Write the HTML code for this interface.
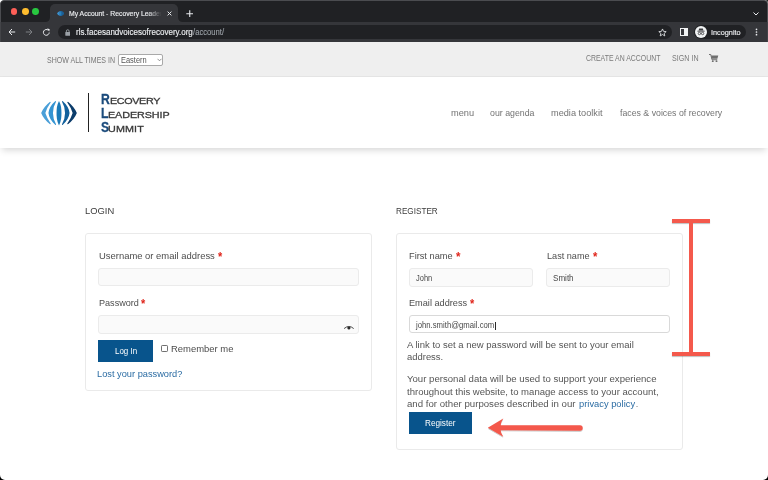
<!DOCTYPE html>
<html><head><meta charset="utf-8">
<style>
*{margin:0;padding:0;box-sizing:border-box}
html,body{width:768px;height:480px;overflow:hidden;background:#000}
#bgtl{position:absolute;left:0;top:0;width:3px;height:3px;background:#fff}
#bgtr{position:absolute;right:0;top:0;width:4px;height:4px;background:#262927}
body{font-family:"Liberation Sans",sans-serif;position:relative}
#win{position:absolute;left:0;top:0;width:768px;height:480px;background:#fff;border-radius:4px 4px 5px 5px;overflow:hidden}
.a{position:absolute}
.t{position:absolute;white-space:nowrap;line-height:1;transform-origin:0 0}
#title{left:0;top:0;width:768px;height:23px;background:#202124;border:1px solid #4b4c50;border-bottom:none;border-radius:4px 4px 0 0}
#toolbar{left:0;top:22px;width:768px;height:19.5px;background:#35363a;border-left:1px solid #434448;border-right:1px solid #434448}
.dot{position:absolute;width:6.8px;height:6.8px;border-radius:50%;top:7.1px}
#tab{left:49.5px;top:4.3px;width:128px;height:18px;background:#35363a;border-radius:5px 5px 0 0}
#omni{left:57.8px;top:24.8px;width:614px;height:14px;background:#202124;border-radius:7px}
#pill{left:694px;top:25px;width:52px;height:14px;background:#202124;border-radius:7px}
#topbar{left:0;top:41.5px;width:768px;height:35.6px;background:#efefef;border-bottom:1px solid #e5e5e5}
#header{left:0;top:77.1px;width:768px;height:70.8px;background:#fff;box-shadow:0 4px 7px -2px rgba(0,0,0,.17)}
.box{position:absolute;border:1px solid #eaeaea;border-radius:3px;background:#fff}
.inp{position:absolute;border:1px solid #ebebeb;border-radius:3px;background:#fafafa}
.btn{position:absolute;background:#08548c}
.red{position:absolute;background:#f4594c;box-shadow:0 1px 1px rgba(0,0,0,.25)}
</style></head><body>
<div id="bgtl"></div><div id="bgtr"></div>
<div id="win">
  <div id="title" class="a">
    <div class="dot" style="left:9.6px;background:#fe5f57"></div>
    <div class="dot" style="left:21px;background:#febc2e"></div>
    <div class="dot" style="left:31.2px;background:#28c840"></div>
  </div>
  <div id="tab" class="a"></div>
  <div id="toolbar" class="a"></div>
  <!-- tab flares -->
  <svg class="a" style="left:44.5px;top:17px" width="5" height="5"><path d="M0 5 Q5 5 5 0 L5 5 Z" fill="#35363a"/></svg>
  <svg class="a" style="left:177.5px;top:17px" width="5" height="5"><path d="M5 5 Q0 5 0 0 L0 5 Z" fill="#35363a"/></svg>
  <!-- favicon -->
  <svg class="a" style="left:56.6px;top:10.9px" width="7.4" height="5" viewBox="-9 -6 18 12">
    <path d="M-2 -5.8 Q-8 -3 -9 0 Q-8 3 -2 5.8 Z" fill="#3a8fcc"/>
    <path d="M-2.6 -5.8 Q0 -6.5 2.6 -5.8 Q8 -3 9 0 Q8 3 2.6 5.8 Q0 6.5 -2.6 5.8 Q-1 0 -2.6 -5.8Z" fill="#1b5f96"/>
    <ellipse cx="0" cy="0" rx="1.6" ry="5.6" fill="#2a83c0"/>
  </svg>
  <!-- tab close -->
  <svg class="a" style="left:166.7px;top:10.9px" width="5" height="5"><path d="M0.6 0.6 L4.4 4.4 M4.4 0.6 L0.6 4.4" stroke="#e8eaed" stroke-width="1"/></svg>
  <!-- new tab plus -->
  <svg class="a" style="left:185.8px;top:9.7px" width="7.5" height="7.5"><path d="M3.75 0.3 V7.2 M0.3 3.75 H7.2" stroke="#e8eaed" stroke-width="1.1"/></svg>
  <!-- chevron -->
  <svg class="a" style="left:753px;top:11.5px" width="6" height="4"><path d="M0.5 0.5 L3 3 L5.5 0.5" stroke="#e8eaed" stroke-width="1" fill="none"/></svg>
  <!-- nav buttons -->
  <svg class="a" style="left:7.5px;top:28px" width="8" height="8"><path d="M7.2 4 H1.2 M4 1 L1 4 L4 7" stroke="#e8eaed" stroke-width="1" fill="none"/></svg>
  <svg class="a" style="left:24.7px;top:28px" width="8" height="8"><path d="M0.8 4 H6.8 M4 1 L7 4 L4 7" stroke="#7c7e82" stroke-width="1" fill="none"/></svg>
  <svg class="a" style="left:41.6px;top:27.6px" width="9" height="9"><path d="M7.2 4.5 A2.9 2.9 0 1 1 6.3 2.3" stroke="#e8eaed" stroke-width="1" fill="none"/><path d="M4.9 0.6 L7.6 0.9 L7.3 3.6 Z" fill="#e8eaed"/></svg>
  <div id="omni" class="a"></div>
  <!-- lock -->
  <svg class="a" style="left:64.6px;top:28.6px" width="5.5" height="7"><path d="M1.4 3 V2.1 A1.35 1.35 0 0 1 4.1 2.1 V3" stroke="#9aa0a6" stroke-width="0.9" fill="none"/><rect x="0.3" y="3" width="4.9" height="3.8" rx="0.5" fill="#9aa0a6"/></svg>
  <!-- star -->
  <svg class="a" style="left:657.5px;top:27.5px" width="9" height="9" viewBox="0 0 24 24"><path d="M12 2.5 L14.8 9 L21.8 9.6 L16.5 14.2 L18.1 21.1 L12 17.4 L5.9 21.1 L7.5 14.2 L2.2 9.6 L9.2 9 Z" stroke="#e8eaed" stroke-width="2.2" fill="none" stroke-linejoin="round"/></svg>
  <!-- sidebar icon -->
  <div class="a" style="left:679.9px;top:27.9px;width:7.8px;height:8.1px;border:1px solid #f1f3f4;"></div>
  <div class="a" style="left:684.2px;top:27.9px;width:3.5px;height:8.1px;background:#f1f3f4"></div>
  <div id="pill" class="a"></div>
  <svg class="a" style="left:694.5px;top:25.8px" width="12" height="12" viewBox="0 0 12 12">
    <circle cx="6" cy="6" r="6" fill="#f1f3f4"/>
    <path d="M4.1 2.6 H7.9 L8.4 4.6 H3.6 Z" fill="#3c3d40"/>
    <rect x="2.4" y="4.7" width="7.2" height="0.9" fill="#3c3d40"/>
    <circle cx="4.4" cy="7.5" r="1.2" stroke="#3c3d40" stroke-width="0.8" fill="none"/>
    <circle cx="7.6" cy="7.5" r="1.2" stroke="#3c3d40" stroke-width="0.8" fill="none"/>
    <path d="M5.5 7.3 H6.5" stroke="#3c3d40" stroke-width="0.6"/>
  </svg>
  <!-- menu dots -->
  <svg class="a" style="left:754.5px;top:28px" width="3" height="9"><circle cx="1.5" cy="1.3" r="0.85" fill="#e8eaed"/><circle cx="1.5" cy="4.0" r="0.85" fill="#e8eaed"/><circle cx="1.5" cy="6.7" r="0.85" fill="#e8eaed"/></svg>

  <!-- PAGE -->
  <div id="topbar" class="a"></div>
  <div class="a" style="left:118px;top:53.5px;width:45.3px;height:12px;background:#fff;border:1px solid #a9a9a9;border-radius:2px"></div>
  <svg class="a" style="left:156.5px;top:57.5px" width="5" height="4"><path d="M0.5 0.8 L2.5 2.8 L4.5 0.8" stroke="#777" stroke-width="0.8" fill="none"/></svg>
  <!-- cart -->
  <svg class="a" style="left:709px;top:53.8px" width="9.5" height="8.5" viewBox="0 0 19 17">
    <path d="M0 1 H3.5 L6 11.5 H16.5" stroke="#6f6f6f" stroke-width="2" fill="none"/>
    <path d="M4.3 3 H18.5 L16.8 9.5 H5.8 Z" fill="#6f6f6f"/>
    <circle cx="7.5" cy="14.5" r="1.9" fill="#6f6f6f"/>
    <circle cx="15" cy="14.5" r="1.9" fill="#6f6f6f"/>
  </svg>
  <div id="header" class="a"></div>
  <!-- logo -->
  <svg class="a" style="left:38.55px;top:98.5px" width="40" height="28" viewBox="-20 -14 40 28">
    <path d="M-9.0 -11.3 Q-15.5 -6 -17.85 0 Q-15.5 6 -9.0 11.3 Q-8.5 11.3 -8.2 10.8 Q-12 5.5 -13.65 0 Q-12 -5.5 -8.2 -10.8 Q-8.5 -11.3 -9.0 -11.3 Z" fill="#4a9fd8"/>
    <path d="M-3.6 -11.9 Q-9.8 -6.5 -10.55 0 Q-9.8 6.5 -3.6 11.9 Q-3.1 11.9 -2.9 11.4 Q-6.05 6 -6.05 0 Q-6.05 -6 -2.9 -11.4 Q-3.1 -11.9 -3.6 -11.9 Z" fill="#3594d2"/>
    <path d="M0 -12.1 C-2.2 -8 -2.45 -4 -2.45 0 C-2.45 4 -2.2 8 0 12.4 C2.2 8 2.45 4 2.45 0 C2.45 -4 2.2 -8 0 -12.1 Z" fill="#1a7ab8"/>
    <path d="M3.6 -11.9 Q9.8 -6.5 10.55 0 Q9.8 6.5 3.6 11.9 Q3.1 11.9 2.9 11.4 Q6.05 6 6.05 0 Q6.05 -6 2.9 -11.4 Q3.1 -11.9 3.6 -11.9 Z" fill="#11609c"/>
    <path d="M9.0 -11.3 Q15.5 -6 17.85 0 Q15.5 6 9.0 11.3 Q8.5 11.3 8.2 10.8 Q12 5.5 13.65 0 Q12 -5.5 8.2 -10.8 Q8.5 -11.3 9.0 -11.3 Z" fill="#0c3d6b"/>
  </svg>
  <div class="a" style="left:87.8px;top:93px;width:1.3px;height:38.8px;background:#222"></div>

  <!-- login box -->
  <div class="box" style="left:85px;top:233px;width:287px;height:157.5px"></div>
  <div class="inp" style="left:98.3px;top:268px;width:260.6px;height:18.4px"></div>
  <div class="inp" style="left:98.3px;top:315.3px;width:260.6px;height:18.4px"></div>
  <svg class="a" style="left:343.5px;top:324.5px" width="10" height="5.5" viewBox="0 0 20 11"><path d="M0.8 6.6 Q9.8 -1.2 18.8 6.6" stroke="#2a2a2a" stroke-width="1.7" fill="none" stroke-linecap="round"/><path d="M7 3.4 H12.6 V6.4 A2.8 2.8 0 0 1 7 6.4 Z" fill="#2a2a2a"/></svg>
  <div class="btn" style="left:98.1px;top:339.9px;width:54.8px;height:21.7px"></div>
  <div class="a" style="left:161px;top:345.3px;width:7px;height:7px;border:0.7px solid #707070;border-radius:1.2px;background:#fff"></div>

  <!-- register box -->
  <div class="box" style="left:396px;top:233px;width:287px;height:216.5px"></div>
  <div class="inp" style="left:408.7px;top:268px;width:124.3px;height:18.6px"></div>
  <div class="inp" style="left:546.1px;top:268px;width:123.6px;height:18.6px"></div>
  <div class="a" style="left:408.6px;top:315.3px;width:261.1px;height:18.2px;border:1px solid #d9d9d9;border-radius:3px;background:#fff"></div>
  <div class="a" style="left:494.5px;top:321.6px;width:0.9px;height:8.4px;background:#2a2a2a"></div>
  <div class="btn" style="left:408.9px;top:412.2px;width:62.8px;height:21.6px"></div>

  <!-- annotations -->
  <div class="red" style="left:672.1px;top:219.2px;width:37.7px;height:4px"></div>
  <div class="red" style="left:689px;top:222px;width:4.2px;height:131px;box-shadow:none"></div>
  <div class="red" style="left:672px;top:352px;width:38px;height:4px"></div>
  <svg class="a" style="left:485px;top:416px" width="100" height="24" viewBox="485 416 100 24">
    <defs><filter id="sh" x="-10%" y="-30%" width="120%" height="160%"><feDropShadow dx="0" dy="0.8" stdDeviation="0.6" flood-color="#000" flood-opacity="0.3"/></filter></defs>
    <g filter="url(#sh)">
    <path d="M487.8 427.7 L503.3 418.6 Q500.5 423 500.8 425.2 L580 425.3 A2.7 2.7 0 0 1 580 430.7 L500.8 430.3 Q500.5 432.5 503.3 436.8 Z" fill="#f4594c"/>
    </g>
  </svg>

<div class="t" style="left:68.80px;top:10px;font-size:7.0px;color:#eceef0;font-weight:normal;transform:scaleX(0.9735);-webkit-text-stroke:0.15px #e8eaed;">My Account - Recovery Leader</div>
<div class="t" style="left:75.80px;top:28px;font-size:8.3px;color:#eceef0;font-weight:normal;transform:scaleX(0.9682);-webkit-text-stroke:0.15px #e8eaed;">rls.facesandvoicesofrecovery.org</div>
<div class="t" style="left:193.30px;top:28px;font-size:8.3px;color:#9aa0a6;font-weight:normal;transform:scaleX(0.9225);-webkit-text-stroke:0.1px #9aa0a6;">/account/</div>
<div class="t" style="left:710.80px;top:29px;font-size:7.8px;color:#eceef0;font-weight:normal;transform:scaleX(0.9347);-webkit-text-stroke:0.15px #e8eaed;">Incognito</div>
<div class="t" style="left:46.80px;top:56px;font-size:8.6px;color:#777;font-weight:normal;transform:scaleX(0.8183);">SHOW ALL TIMES IN</div>
<div class="t" style="left:120.80px;top:56px;font-size:8.6px;color:#555;font-weight:normal;transform:scaleX(0.8680);">Eastern</div>
<div class="t" style="left:585.70px;top:54px;font-size:8.4px;color:#7a7a7a;font-weight:normal;transform:scaleX(0.8259);">CREATE AN ACCOUNT</div>
<div class="t" style="left:671.80px;top:54px;font-size:8.4px;color:#7a7a7a;font-weight:normal;transform:scaleX(0.8513);">SIGN IN</div>
<div class="t" style="left:450.70px;top:108px;font-size:9.8px;color:#737373;font-weight:normal;transform:scaleX(0.9436);">menu</div>
<div class="t" style="left:489.70px;top:108px;font-size:9.8px;color:#737373;font-weight:normal;transform:scaleX(0.8978);">our agenda</div>
<div class="t" style="left:551.00px;top:108px;font-size:9.8px;color:#737373;font-weight:normal;transform:scaleX(0.9371);">media toolkit</div>
<div class="t" style="left:619.60px;top:108px;font-size:9.8px;color:#737373;font-weight:normal;transform:scaleX(0.8939);">faces &amp; voices of recovery</div>
<div class="t" style="left:85.40px;top:206px;font-size:9.9px;color:#3c3c3c;font-weight:normal;transform:scaleX(0.9510);">LOGIN</div>
<div class="t" style="left:396.40px;top:206px;font-size:9.9px;color:#3c3c3c;font-weight:normal;transform:scaleX(0.8263);">REGISTER</div>
<div class="t" style="left:98.60px;top:251px;font-size:9.8px;color:#4d4d4d;font-weight:normal;transform:scaleX(0.9624);">Username or email address</div>
<div class="t" style="left:217.80px;top:251px;font-size:12.5px;color:#e0261c;font-weight:bold;transform:scaleX(0.8800);">*</div>
<div class="t" style="left:98.80px;top:298px;font-size:9.8px;color:#4d4d4d;font-weight:normal;transform:scaleX(0.9280);">Password</div>
<div class="t" style="left:141.40px;top:298px;font-size:12.5px;color:#e0261c;font-weight:bold;transform:scaleX(0.8800);">*</div>
<div class="t" style="left:114.75px;top:347px;font-size:8.8px;color:#ffffff;font-weight:normal;transform:scaleX(0.9057);">Log In</div>
<div class="t" style="left:170.80px;top:344px;font-size:9.6px;color:#4d4d4d;font-weight:normal;transform:scaleX(0.9841);">Remember me</div>
<div class="t" style="left:96.80px;top:369px;font-size:9.8px;color:#2b6ca3;font-weight:normal;transform:scaleX(0.9445);">Lost your password?</div>
<div class="t" style="left:408.90px;top:251px;font-size:9.8px;color:#4d4d4d;font-weight:normal;transform:scaleX(0.9418);">First name</div>
<div class="t" style="left:456.10px;top:251px;font-size:12.5px;color:#e0261c;font-weight:bold;transform:scaleX(0.9200);">*</div>
<div class="t" style="left:546.70px;top:251px;font-size:9.8px;color:#4d4d4d;font-weight:normal;transform:scaleX(0.9309);">Last name</div>
<div class="t" style="left:592.50px;top:251px;font-size:12.5px;color:#e0261c;font-weight:bold;transform:scaleX(0.9000);">*</div>
<div class="t" style="left:415.60px;top:274px;font-size:9.0px;color:#4a4a4a;font-weight:normal;transform:scaleX(0.8303);">John</div>
<div class="t" style="left:552.90px;top:274px;font-size:9.0px;color:#4a4a4a;font-weight:normal;transform:scaleX(0.8957);">Smith</div>
<div class="t" style="left:408.80px;top:298px;font-size:9.8px;color:#4d4d4d;font-weight:normal;transform:scaleX(0.9361);">Email address</div>
<div class="t" style="left:470.40px;top:298px;font-size:12.5px;color:#e0261c;font-weight:bold;transform:scaleX(0.8800);">*</div>
<div class="t" style="left:416.46px;top:321px;font-size:9.0px;color:#4a4a4a;font-weight:normal;transform:scaleX(0.8585);">john.smith@gmail.com</div>
<div class="t" style="left:407.20px;top:340px;font-size:9.7px;color:#555555;font-weight:normal;transform:scaleX(0.9819);">A link to set a new password will be sent to your email</div>
<div class="t" style="left:407.20px;top:352px;font-size:9.7px;color:#555555;font-weight:normal;transform:scaleX(0.9736);">address.</div>
<div class="t" style="left:407.20px;top:374px;font-size:9.7px;color:#555555;font-weight:normal;transform:scaleX(0.9913);">Your personal data will be used to support your experience</div>
<div class="t" style="left:407.20px;top:387px;font-size:9.7px;color:#555555;font-weight:normal;transform:scaleX(0.9856);">throughout this website, to manage access to your account,</div>
<div class="t" style="left:407.20px;top:399px;font-size:9.7px;color:#555555;font-weight:normal;transform:scaleX(0.9966);">and for other purposes described in our</div>
<div class="t" style="left:578.80px;top:399px;font-size:9.7px;color:#2b6ca3;font-weight:normal;transform:scaleX(0.9640);">privacy policy</div>
<div class="t" style="left:635.80px;top:399px;font-size:9.7px;color:#555555;font-weight:normal;transform:scaleX(0.7500);">.</div>
<div class="t" style="left:424.80px;top:419px;font-size:8.8px;color:#ffffff;font-weight:normal;transform:scaleX(0.9322);">Register</div>
<div class="t" style="left:101.00px;top:92px;font-size:14.5px;color:#1b4b7c;font-weight:bold;transform:scaleX(0.8400);-webkit-text-stroke:0.3px #1b4b7c;">R</div>
<div class="t" style="left:109.70px;top:96px;font-size:9.4px;color:#383838;font-weight:normal;transform:scaleX(1.1500);letter-spacing:-0.317px;-webkit-text-stroke:0.3px #383838;">ECOVERY</div>
<div class="t" style="left:101.00px;top:106px;font-size:14.5px;color:#1b4b7c;font-weight:bold;transform:scaleX(0.8400);-webkit-text-stroke:0.3px #1b4b7c;">L</div>
<div class="t" style="left:107.90px;top:110px;font-size:9.4px;color:#383838;font-weight:normal;transform:scaleX(1.1500);letter-spacing:-0.067px;-webkit-text-stroke:0.3px #383838;">EADERSHIP</div>
<div class="t" style="left:100.50px;top:120px;font-size:14.5px;color:#1b4b7c;font-weight:bold;transform:scaleX(0.8400);-webkit-text-stroke:0.3px #1b4b7c;">S</div>
<div class="t" style="left:108.40px;top:124px;font-size:9.4px;color:#383838;font-weight:normal;transform:scaleX(1.1500);letter-spacing:0.099px;-webkit-text-stroke:0.3px #383838;">UMMIT</div>
<div class="a" style="left:148px;top:8px;width:16px;height:10px;background:linear-gradient(90deg,rgba(53,54,58,0),#35363a 85%)"></div>
</div>
</body></html>
